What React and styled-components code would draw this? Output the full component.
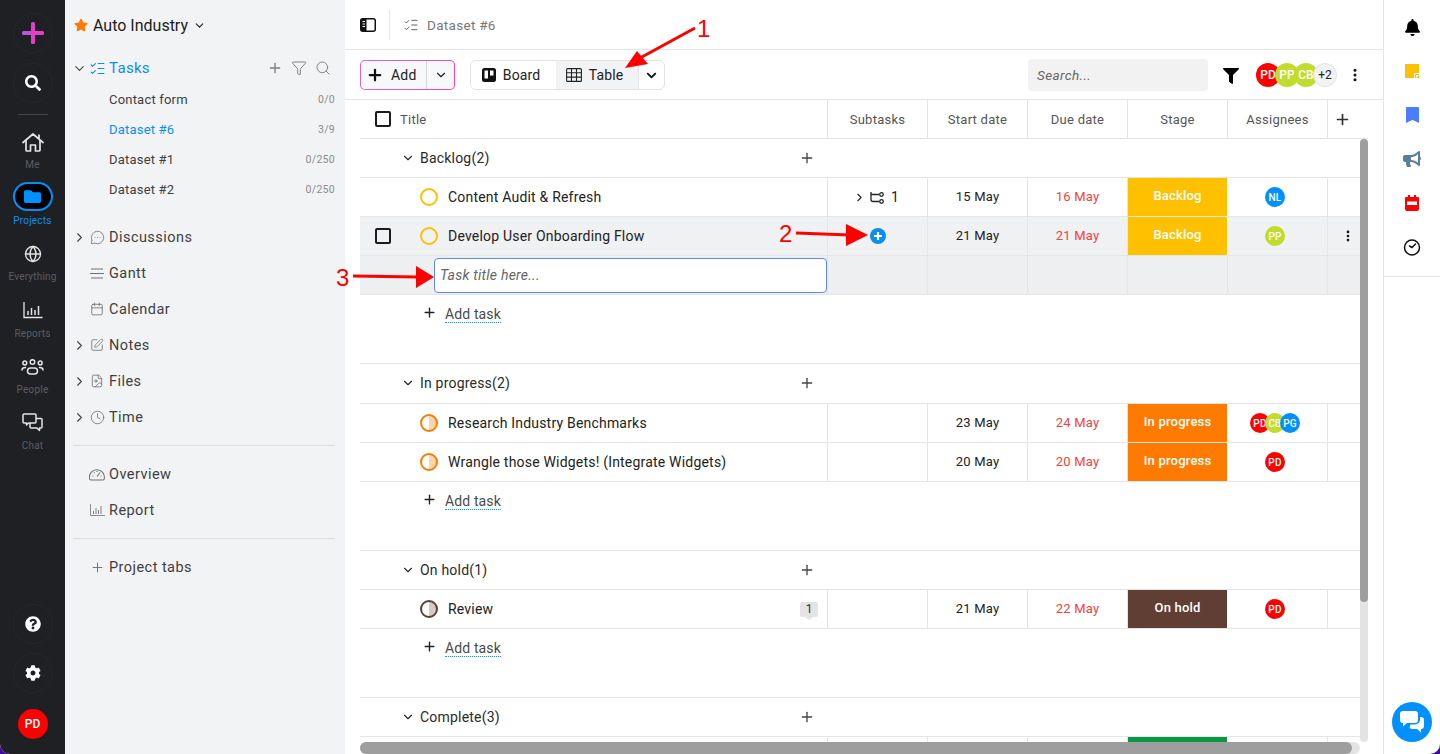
import React from "react";
import styled, { createGlobalStyle } from "styled-components";
import {
  Globe, Plus, ChevronDown, ChevronRight, ListChecks, Filter, Search,
  MessageCircleMore, Calendar, SquarePen, FileImage, Clock, EllipsisVertical,
} from "lucide-react";
import { FaStar, FaFilter, FaBell, FaBullhorn, FaFolder, FaSearch, FaQuestionCircle, FaCog } from "react-icons/fa";

const GlobalStyle = createGlobalStyle`
  html, body { margin: 0; padding: 0; background: #3d0f9c; }
  * { box-sizing: border-box; }
  body { font-family: Roboto, "Liberation Sans", sans-serif; color: #222; }
`;

const Page = styled.div`
  position: relative;
  display: flex;
  width: 1440px;
  height: 754px;
  overflow: hidden;
  background: #fff;
  border-radius: 0 0 10px 10px;
`;

/* far left dark rail */
const Rail = styled.nav`
  width: 65px;
  flex: none;
  background: #1f2024;
  display: flex;
  flex-direction: column;
  align-items: center;
  padding: 13px 0 15px;
  color: #fff;
`;
const RoundBtn = styled.div`
  width: 40px;
  height: 40px;
  flex: none;
  border-radius: 50%;
  border: 1px solid #26272b;
  display: flex;
  align-items: center;
  justify-content: center;
  margin-bottom: ${(p) => p.$mb || 0}px;
  svg { display: block; }
`;
const RailLine = styled.div`
  width: 30px;
  height: 1px;
  background: #44454a;
  margin: 1px 0 13px;
`;
const RailItem = styled.div`
  width: 100%;
  height: 56.2px;
  flex: none;
  padding-top: 2px;
  display: flex;
  flex-direction: column;
  align-items: center;
  font-size: 10px;
  line-height: 12px;
  letter-spacing: 0.2px;
  color: ${(p) => (p.$active ? "#0a8fef" : "#5d5e63")};
`;
const RailIcon = styled.div`
  width: 40px;
  height: 24px;
  margin-bottom: 5px;
  display: flex;
  align-items: center;
  justify-content: center;
  color: #e4e4e4;
`;
const ActivePill = styled.div`
  width: 40px;
  height: 29px;
  margin: -4px 0 4px;
  border-radius: 15px;
  border: 2px solid #0091ff;
  background: #000;
  color: #0091ff;
  display: flex;
  align-items: center;
  justify-content: center;
`;
const RailSpacer = styled.div`
  flex: 1;
`;
const UserBadge = styled.div`
  width: 30px;
  height: 30px;
  border-radius: 50%;
  background: #ff0000;
  color: #fff;
  font-size: 12px;
  font-weight: 500;
  display: flex;
  align-items: center;
  justify-content: center;
`;

/* project sidebar */
const Sidebar = styled.aside`
  width: 280px;
  flex: none;
  background: #f2f3f5;
  padding: 0 10px 0 6px;
`;
const ProjectHead = styled.div`
  height: 50px;
  padding-left: 3px;
  display: flex;
  align-items: center;
  font-size: 16px;
  color: #1c1c1c;
  span { margin: 0 5px 0 5px; }
`;
const NavRow = styled.div`
  height: 36px;
  display: flex;
  align-items: center;
  color: #3f3f3f;
  font-size: 14.5px;
  letter-spacing: 0.45px;
  margin-top: ${(p) => p.$mt || 0}px;
`;
const TasksRow = styled(NavRow)`
  height: 31px;
  margin-top: 3px;
  padding-bottom: 1px;
  color: #0a8fef;
  font-size: 15px;
  letter-spacing: 0.3px;
`;
const ChevronSlot = styled.div`
  width: 16px;
  flex: none;
  display: flex;
  justify-content: center;
  color: #444;
`;
const IconSlot = styled.div`
  width: 18px;
  flex: none;
  margin: 0 3px 0 1px;
  display: flex;
  justify-content: center;
  color: ${(p) => p.$color || "#707070"};
`;
const RowTools = styled.div`
  margin-left: auto;
  display: flex;
  gap: 8px;
  color: #7b7b7b;
  padding-right: 4px;
`;
const SubRow = styled.div`
  height: 30px;
  padding-left: 38px;
  display: flex;
  align-items: center;
  justify-content: space-between;
  font-size: 13px;
  letter-spacing: 0.2px;
  color: ${(p) => (p.$active ? "#0a8fef" : "#3f3f3f")};
`;
const Count = styled.span`
  font-size: 10.5px;
  letter-spacing: 0.3px;
  color: #8b8b8b;
`;
const SideLine = styled.div`
  height: 1px;
  margin: 10px 0 10px 2px;
  background: #dcdcdc;
`;

/* centre */
const Main = styled.main`
  flex: 1;
  min-width: 0;
  display: flex;
  flex-direction: column;
`;
const TopBar = styled.header`
  height: 50px;
  flex: none;
  border-bottom: 1px solid #e5e5e5;
  padding-left: 15px;
  display: flex;
  align-items: center;
  font-size: 13.5px;
  letter-spacing: 0.3px;
  color: #777;
`;
const TopDivider = styled.div`
  width: 1px;
  height: 30px;
  background: #e5e5e5;
  margin: 0 13px;
`;
const Crumb = styled.span`
  margin-left: 8px;
`;
const Toolbar = styled.div`
  height: 50px;
  flex: none;
  border-bottom: 1px solid #e5e5e5;
  padding: 0 20px 0 15px;
  display: flex;
  align-items: center;
`;
const AddGroup = styled.div`
  width: 95px;
  height: 30px;
  margin-top: 1px;
  border: 1px solid transparent;
  border-radius: 5px;
  background: linear-gradient(#f7f8f9, #f7f8f9) padding-box, linear-gradient(120deg, #c96bf0, #ff3fa0) border-box;
  display: flex;
  align-items: center;
  font-size: 14px;
  letter-spacing: 0.2px;
  color: #222;
`;
const AddLabel = styled.div`
  width: 66px;
  height: 100%;
  padding-left: 5px;
  display: flex;
  align-items: center;
  gap: 7px;
  border-right: 1px solid #d8d8d8;
`;
const AddCaret = styled.div`
  flex: 1;
  display: flex;
  justify-content: center;
`;
const ViewSwitch = styled.div`
  width: 195px;
  height: 30px;
  margin: 1px 0 0 15px;
  border: 1px solid #e3e3e3;
  border-radius: 6px;
  display: flex;
  overflow: hidden;
  font-size: 14px;
  letter-spacing: 0.1px;
  color: #222;
`;
const ViewTab = styled.div`
  width: ${(p) => p.$w}px;
  padding-right: 5px;
  display: flex;
  align-items: center;
  justify-content: center;
  gap: 7px;
  background: ${(p) => (p.$active ? "#f2f3f5" : "#fff")};
  border-right: ${(p) => (p.$active ? "1px solid #e3e3e3" : "0")};
`;
const ViewCaret = styled.div`
  flex: 1;
  display: flex;
  align-items: center;
  justify-content: center;
`;
const SearchBox = styled.div`
  width: 180px;
  height: 32px;
  margin-left: auto;
  padding: 1px 0 0 9px;
  border-radius: 4px;
  background: #f2f2f2;
  display: flex;
  align-items: center;
  font-size: 13.5px;
  font-style: italic;
  letter-spacing: 0.4px;
  color: #666;
`;
const ToolbarFilter = styled.div`
  margin: 2px 17px 0 15px;
  display: flex;
`;
const AvatarStack = styled.div`
  display: flex;
  align-items: center;
`;
const Avatar = styled.div`
  width: ${(p) => p.$size || 20}px;
  height: ${(p) => p.$size || 20}px;
  flex: none;
  margin-left: ${(p) => p.$overlap || 0}px;
  border-radius: 50%;
  background: ${(p) => p.$bg};
  color: ${(p) => p.$fg || "#fff"};
  border: ${(p) => (p.$outlined ? "1px solid #e2e2e2" : "0")};
  font-size: ${(p) => p.$font || 10}px;
  font-weight: ${(p) => (p.$outlined ? 400 : 500)};
  display: flex;
  align-items: center;
  justify-content: center;
  overflow: hidden;
  white-space: nowrap;
`;
const ToolbarMore = styled.div`
  margin-left: 10px;
  display: flex;
  color: #111;
`;

/* table */
const TablePanel = styled.div`
  position: relative;
  flex: 1;
  min-height: 0;
  margin: 0 15px 0 15px;
  overflow: hidden;
`;
const COLS = "468px repeat(5, 100px) 32px";
const HeadRow = styled.div`
  display: grid;
  grid-template-columns: ${COLS};
  height: 39px;
  border-bottom: 1px solid #e5e5e5;
  font-size: 13px;
  letter-spacing: 0.25px;
  color: #555;
`;
const HeadCell = styled.div`
  display: flex;
  align-items: center;
  justify-content: center;
  border-right: 1px solid #e5e5e5;
`;
const TitleHead = styled(HeadCell)`
  justify-content: flex-start;
  padding-left: 15px;
  gap: 9px;
`;
const PlusHead = styled(HeadCell)`
  border-right: 0;
  justify-content: flex-start;
  padding-left: 6px;
  color: #333;
`;
const CheckBox = styled.div`
  width: 16px;
  height: 16px;
  flex: none;
  border: 2px solid #1c1c1c;
  border-radius: 2px;
  background: transparent;
`;
const GroupRow = styled.div`
  height: ${(p) => p.$h}px;
  border-bottom: 1px solid #e5e5e5;
`;
const GroupHead = styled.div`
  height: 38px;
  width: 468px;
  padding: 0 13px 0 41px;
  display: flex;
  align-items: center;
  gap: 5px;
  font-size: 14px;
  letter-spacing: 0.2px;
  color: #2a2a2a;
`;
const GroupPlus = styled.div`
  margin-left: auto;
  display: flex;
  color: #444;
`;
const TaskRow = styled.div`
  display: grid;
  grid-template-columns: ${COLS};
  height: 39px;
  border-bottom: 1px solid #e5e5e5;
  background: ${(p) => p.$bg || "#fff"};
`;
const Cell = styled.div`
  display: flex;
  align-items: center;
  justify-content: center;
  border-right: 1px solid #e5e5e5;
  font-size: 13px;
  letter-spacing: 0.2px;
  color: ${(p) => p.$color || "#222"};
  gap: 4px;
`;
const DateCell = styled(Cell)`
  padding-bottom: 1px;
`;
const SubtaskCell = styled(Cell)`
  padding-right: 3px;
`;
const SubCount = styled.span`
  margin-left: 2px;
  font-size: 14px;
`;
const TitleCell = styled(Cell)`
  justify-content: flex-start;
  padding-left: 60px;
  font-size: 14px;
  letter-spacing: 0.2px;
  gap: 10px;
`;
const InputCell = styled(TitleCell)`
  padding: 2px 0 1px 74px;
`;
const TaskInput = styled.div`
  width: 100%;
  height: 35px;
  padding: 0 0 1px 5px;
  border: 1px solid #5b8def;
  border-radius: 4px;
  background: #fff;
  display: flex;
  align-items: center;
  font-style: italic;
  color: #666;
  letter-spacing: 0.25px;
`;
const HoverCheck = styled(CheckBox)`
  margin-left: -45px;
  margin-right: 19px;
`;
const StatusRing = styled.div`
  width: 18px;
  height: 18px;
  flex: none;
  border-radius: 50%;
  border: 2px solid ${(p) => p.$color};
  background: ${(p) => (p.$half ? `linear-gradient(90deg, transparent 50%, ${p.$half} 50%)` : "transparent")};
`;
const CountFlag = styled.div`
  position: relative;
  width: 18px;
  height: 15px;
  margin: 0 9px 0 auto;
  border-radius: 2px;
  background: #e4e4e4;
  font-size: 12px;
  color: #333;
  letter-spacing: 0;
  display: flex;
  align-items: center;
  justify-content: center;
  &::after {
    content: "";
    position: absolute;
    left: 5px;
    top: 15px;
    border: 4px solid transparent;
    border-top: 3px solid #e4e4e4;
    border-bottom: 0;
  }
`;
const StageCell = styled.div`
  display: flex;
  align-items: center;
  justify-content: center;
  padding-bottom: 3px;
  background: ${(p) => p.$bg};
  border-right: 1px solid #fff;
  color: #fff;
  font-size: 13px;
  font-weight: 500;
  letter-spacing: 0.2px;
`;
const AssigneeCell = styled(Cell)`
  padding-right: 5px;
  gap: 0;
`;
const LastCell = styled(Cell)`
  border-right: 0;
  padding-left: 13px;
  color: #111;
  justify-content: flex-start;
`;
const AddTaskBlock = styled.div`
  height: 69px;
  border-bottom: 1px solid #e5e5e5;
  padding: 10px 0 0 62px;
  display: flex;
  align-items: flex-start;
  gap: 8px;
  color: #222;
`;
const AddTaskLabel = styled.span`
  font-size: 14px;
  line-height: 18px;
  letter-spacing: 0.12px;
  color: #4a4a4a;
  border-bottom: 1px dotted #1b94ee;
  height: 18px;
`;
const VScroll = styled.div`
  position: absolute;
  right: 0;
  top: 39px;
  bottom: 12px;
  width: 8px;
  border-radius: 4px;
  background: #e3e3e3;
  &::after {
    content: "";
    position: absolute;
    left: 0;
    right: 0;
    top: 0;
    height: 463px;
    border-radius: 4px;
    background: #9e9e9e;
  }
`;
const HScroll = styled.div`
  position: absolute;
  left: 0;
  right: 8px;
  bottom: 0;
  height: 12px;
  border-radius: 6px;
  background: #e3e3e3;
  &::after {
    content: "";
    position: absolute;
    left: 0;
    top: 0;
    bottom: 0;
    width: 992px;
    border-radius: 6px;
    background: #9e9e9e;
  }
`;

/* right rail */
const RightRail = styled.aside`
  width: 57px;
  flex: none;
  border-left: 1px solid #e5e5e5;
`;
const RightIcons = styled.div`
  height: 277px;
  padding-top: 5px;
  border-bottom: 1px solid #e5e5e5;
  display: flex;
  flex-direction: column;
  align-items: center;
`;
const RightIcon = styled.div`
  height: 44px;
  flex: none;
  display: flex;
  align-items: center;
  justify-content: center;
  color: ${(p) => p.$color || "#000"};
`;
const ChatBubble = styled.div`
  position: absolute;
  left: 1392px;
  top: 702px;
  width: 40px;
  height: 40px;
  border-radius: 50%;
  background: #0091ff;
  display: flex;
  align-items: center;
  justify-content: center;
`;

/* red annotations drawn over the screenshot */
const Arrows = styled.svg`
  position: absolute;
  left: 0;
  top: 0;
  pointer-events: none;
`;
const Mark = styled.span`
  position: absolute;
  left: ${(p) => p.$x}px;
  top: ${(p) => p.$y}px;
  font-family: "Liberation Sans", sans-serif;
  font-size: 24px;
  line-height: 24px;
  color: #f00;
`;

const Dots = ({ size = 16 }) => <EllipsisVertical size={size} strokeWidth={2.6} />;

const RailHome = () => (
  <svg width="22" height="21" viewBox="0 0 22 21" fill="none" stroke="currentColor" strokeWidth="1.700" strokeLinejoin="round" strokeLinecap="round">
    <path d="M1 10.500 11 2l10 8.500M17 3v4" />
    <path d="M4 8.500V18a1 1 0 0 0 1 1h3.500v-6h5v6H17a1 1 0 0 0 1-1V8.500" />
  </svg>
);
const RailReports = () => (
  <svg width="20" height="17" viewBox="0 0 20 17" fill="none" stroke="currentColor">
    <path d="M1 0v15.500h18.500" strokeWidth="1.300" />
    <path d="M5 9v4M8.500 6v7M12 8v5M15.500 4v9" strokeWidth="1.500" />
  </svg>
);
const RailPeople = () => (
  <svg width="23" height="16" viewBox="0 0 23 16" fill="none" stroke="currentColor" strokeWidth="1.500" strokeLinecap="round">
    <circle cx="11.500" cy="3" r="2.300" />
    <circle cx="3.800" cy="4" r="1.900" />
    <circle cx="19.200" cy="4" r="1.900" />
    <rect x="6.500" y="9" width="10" height="6" rx="3" />
    <path d="M1 11c0-1.500 1-2.500 3.500-2.500M22 11c0-1.500-1-2.500-3.500-2.500" />
  </svg>
);
const RailChat = () => (
  <svg width="21" height="19" viewBox="0 0 21 19" fill="none" stroke="currentColor" strokeWidth="1.500" strokeLinejoin="round">
    <path d="M2 1h11a1 1 0 0 1 1 1v7a1 1 0 0 1-1 1H6.500L4.500 12v-2H2a1 1 0 0 1-1-1V2a1 1 0 0 1 1-1z" />
    <path d="M14 5.500h5a1 1 0 0 1 1 1V14a1 1 0 0 1-1 1h-1.500v2.500L15 15H9a1 1 0 0 1-1-1v-4" />
  </svg>
);
const RailPlus = () => (
  <svg width="22" height="22" viewBox="0 0 22 22">
    <defs>
      <linearGradient id="pl" x1="0" y1="0" x2="1" y2="0">
        <stop offset="0" stopColor="#b05be8" />
        <stop offset="1" stopColor="#f03cb0" />
      </linearGradient>
    </defs>
    <rect x="0" y="9" width="22" height="4" rx="1.500" fill="url(#pl)" />
    <rect x="9" y="0" width="4" height="22" rx="1.500" fill="#e23fc8" />
  </svg>
);
const GaugeIcon = () => (
  <svg width="16" height="13" viewBox="0 0 16 13" fill="none" stroke="#707070" strokeWidth="1.100">
    <path d="M2 12h12a1.500 1.500 0 0 0 1.300-1.500 7.500 7.500 0 1 0-14.800 0A1.500 1.500 0 0 0 2 12z" />
    <path d="M8 8.500 11 4.500M3.500 8h1M11.500 8h1M5 4.500l.6.6M8 3v1" />
  </svg>
);
const ReportIcon = () => (
  <svg width="15" height="12" viewBox="0 0 15 12" fill="none" stroke="#808080" strokeWidth="0.900">
    <path d="M.5 0v11.500H15" />
    <path d="M3.500 7v3M6 4v6M8.500 6v4M11 2v8" strokeWidth="1" />
  </svg>
);
const GanttIcon = () => (
  <svg width="14" height="11" viewBox="0 0 14 11" stroke="#707070" strokeWidth="1.200"><path d="M1 1h12M0 5.500h14M1 10h12" /></svg>
);
const PanelIcon = () => (
  <svg width="16" height="14" viewBox="0 0 16 14">
    <rect x="0.750" y="0.750" width="14.500" height="12.500" rx="2" fill="none" stroke="#111" strokeWidth="1.500" />
    <rect x="1" y="1" width="5.500" height="12" fill="#111" />
    <path d="M2.500 3.500h2.500M2.500 6h2.500M2.500 8.500h2.500" stroke="#fff" strokeWidth="1" />
  </svg>
);
const BoardIcon = () => (
  <svg width="14" height="14" viewBox="0 0 14 14">
    <rect width="14" height="14" rx="2.500" fill="#111" />
    <rect x="2.500" y="2.500" width="3.500" height="8" fill="#fff" />
    <rect x="8" y="2.500" width="3.500" height="5" fill="#fff" />
  </svg>
);
const TableIcon = () => (
  <svg width="16" height="14" viewBox="0 0 16 14" fill="none" stroke="#222" strokeWidth="1.100">
    <rect x="0.600" y="0.600" width="14.800" height="12.800" rx="1" />
    <path d="M.6 4.800h14.800M.6 9.100h14.800M5.500.6v12.800M10.500.6v12.800" />
  </svg>
);
const TreeIcon = () => (
  <svg width="15" height="13" viewBox="0 0 15 13" fill="none" stroke="#222" strokeWidth="1.300">
    <path d="M1 1v7.500a2 2 0 0 0 2 2h6M1 3.500h8" />
    <circle cx="11.500" cy="3.500" r="1.800" />
    <circle cx="11.500" cy="10.500" r="1.800" />
  </svg>
);
const BlueAdd = () => (
  <svg width="16" height="16" viewBox="0 0 16 16">
    <circle cx="8" cy="8" r="8" fill="#0a8fef" />
    <path d="M8 4v8M4 8h8" stroke="#fff" strokeWidth="2.200" />
  </svg>
);
const StickyIcon = () => (
  <svg width="14" height="14" viewBox="0 0 14 14">
    <rect width="14" height="14" fill="#ffc000" />
    <path d="M9.500 14V9.500H14" fill="none" stroke="#fff" strokeWidth="1" />
    <path d="M11 14v-3h3z" fill="#fff" />
  </svg>
);
const BookmarkIcon = () => (
  <svg width="13" height="16" viewBox="0 0 13 16">
    <path d="M0 1a1 1 0 0 1 1-1h11a1 1 0 0 1 1 1v15l-3-1.500-3.500-1.500-3.500 1.500L0 16z" fill="#4a7dff" />
  </svg>
);
const RedCalendar = () => (
  <svg width="14" height="16" viewBox="0 0 14 16">
    <path d="M3 0h2v2h4V0h2v2h2a1 1 0 0 1 1 1v11a2 2 0 0 1-2 2H2a2 2 0 0 1-2-2V3a1 1 0 0 1 1-1h2z" fill="#f00" />
    <rect x="2" y="6.500" width="10" height="3.500" fill="#fff" />
  </svg>
);
const DialIcon = () => (
  <svg width="18" height="18" viewBox="0 0 18 18" fill="none" stroke="#111" strokeWidth="1.500">
    <circle cx="9" cy="9.500" r="7.500" />
    <path d="M12.500 6 9 9.500 6.500 8" strokeLinecap="round" />
  </svg>
);
const ChatWhite = () => (
  <svg width="24" height="22" viewBox="0 0 24 22" fill="#fff">
    <path d="M3 0h12a3 3 0 0 1 3 3v6a3 3 0 0 1-3 3H7l-4 3.500V12a3 3 0 0 1-3-3V3a3 3 0 0 1 3-3z" />
    <path d="M20 6h1a3 3 0 0 1 3 3v6a3 3 0 0 1-3 3v3.500L17 18h-5a3 3 0 0 1-2.500-1.500l1-3H15a5 5 0 0 0 5-5z" />
  </svg>
);

const GREY_BG = "#f0f1f3";

const dateCells = (start, due) => (
  <>
    <DateCell>{start}</DateCell>
    <DateCell $color="#f44141">{due}</DateCell>
  </>
);

const Group = ({ label, h = 39 }) => (
  <GroupRow $h={h}>
    <GroupHead>
      <ChevronDown size={14} strokeWidth={2} />
      {label}
      <GroupPlus>
        <Plus size={16} strokeWidth={2} />
      </GroupPlus>
    </GroupHead>
  </GroupRow>
);

const AddTask = () => (
  <AddTaskBlock>
    <Plus size={15} strokeWidth={2.200} />
    <AddTaskLabel>Add task</AddTaskLabel>
  </AddTaskBlock>
);

export default function App() {
  return (
    <Page>
      <GlobalStyle />
      <Rail>
        <RoundBtn $mb={10}><RailPlus /></RoundBtn>
        <RoundBtn $mb={10}><FaSearch size={16} color="#fff" /></RoundBtn>
        <RailLine />
        <RailItem>
          <RailIcon><RailHome /></RailIcon>
          Me
        </RailItem>
        <RailItem $active>
          <ActivePill><FaFolder size={17} /></ActivePill>
          Projects
        </RailItem>
        <RailItem>
          <RailIcon><Globe size={18} strokeWidth={1.800} /></RailIcon>
          Everything
        </RailItem>
        <RailItem>
          <RailIcon><RailReports /></RailIcon>
          Reports
        </RailItem>
        <RailItem>
          <RailIcon><RailPeople /></RailIcon>
          People
        </RailItem>
        <RailItem>
          <RailIcon><RailChat /></RailIcon>
          Chat
        </RailItem>
        <RailSpacer />
        <RoundBtn $mb={9}><FaQuestionCircle size={16} color="#fff" /></RoundBtn>
        <RoundBtn $mb={16}><FaCog size={16} color="#fff" /></RoundBtn>
        <UserBadge>PD</UserBadge>
      </Rail>

      <Sidebar>
        <ProjectHead>
          <FaStar size={14} color="#ff7a00" />
          <span>Auto Industry</span>
          <ChevronDown size={13} strokeWidth={2} />
        </ProjectHead>
        <TasksRow>
          <ChevronSlot><ChevronDown size={15} strokeWidth={1.800} /></ChevronSlot>
          <IconSlot $color="#0a8fef"><ListChecks size={17} strokeWidth={1.600} /></IconSlot>
          Tasks
          <RowTools>
            <Plus size={16} strokeWidth={2} />
            <Filter size={16} strokeWidth={1.400} />
            <Search size={16} strokeWidth={1.400} />
          </RowTools>
        </TasksRow>
        <SubRow>Contact form <Count>0/0</Count></SubRow>
        <SubRow $active>Dataset #6 <Count>3/9</Count></SubRow>
        <SubRow>Dataset #1 <Count>0/250</Count></SubRow>
        <SubRow>Dataset #2 <Count>0/250</Count></SubRow>
        <NavRow $mt={15}>
          <ChevronSlot><ChevronRight size={15} strokeWidth={1.800} /></ChevronSlot>
          <IconSlot><MessageCircleMore size={15} strokeWidth={1.300} /></IconSlot>
          Discussions
        </NavRow>
        <NavRow>
          <ChevronSlot />
          <IconSlot><GanttIcon /></IconSlot>
          Gantt
        </NavRow>
        <NavRow>
          <ChevronSlot />
          <IconSlot><Calendar size={14} strokeWidth={1.400} /></IconSlot>
          Calendar
        </NavRow>
        <NavRow>
          <ChevronSlot><ChevronRight size={15} strokeWidth={1.800} /></ChevronSlot>
          <IconSlot><SquarePen size={14} strokeWidth={1.400} /></IconSlot>
          Notes
        </NavRow>
        <NavRow>
          <ChevronSlot><ChevronRight size={15} strokeWidth={1.800} /></ChevronSlot>
          <IconSlot><FileImage size={14} strokeWidth={1.400} /></IconSlot>
          Files
        </NavRow>
        <NavRow>
          <ChevronSlot><ChevronRight size={15} strokeWidth={1.800} /></ChevronSlot>
          <IconSlot><Clock size={15} strokeWidth={1.300} /></IconSlot>
          Time
        </NavRow>
        <SideLine />
        <NavRow>
          <ChevronSlot />
          <IconSlot><GaugeIcon /></IconSlot>
          Overview
        </NavRow>
        <NavRow>
          <ChevronSlot />
          <IconSlot><ReportIcon /></IconSlot>
          Report
        </NavRow>
        <SideLine />
        <NavRow>
          <ChevronSlot />
          <IconSlot><Plus size={15} strokeWidth={1.500} /></IconSlot>
          Project tabs
        </NavRow>
      </Sidebar>

      <Main>
        <TopBar>
          <PanelIcon />
          <TopDivider />
          <ListChecks size={16} strokeWidth={1.500} color="#666" />
          <Crumb>Dataset #6</Crumb>
        </TopBar>
        <Toolbar>
          <AddGroup>
            <AddLabel><Plus size={18} strokeWidth={3} color="#111" /> Add</AddLabel>
            <AddCaret><ChevronDown size={14} strokeWidth={2} /></AddCaret>
          </AddGroup>
          <ViewSwitch>
            <ViewTab $w={85}><BoardIcon /> Board</ViewTab>
            <ViewTab $w={83} $active><TableIcon /> Table</ViewTab>
            <ViewCaret><ChevronDown size={15} strokeWidth={3} color="#111" /></ViewCaret>
          </ViewSwitch>
          <SearchBox>Search...</SearchBox>
          <ToolbarFilter><FaFilter size={16} color="#000" /></ToolbarFilter>
          <AvatarStack>
            <Avatar $size={24} $font={12} $bg="#f00">PD</Avatar>
            <Avatar $size={24} $font={12} $overlap={-5} $bg="#c2dc2d">PP</Avatar>
            <Avatar $size={24} $font={12} $overlap={-5} $bg="#c2dc2d">CB</Avatar>
            <Avatar $size={24} $font={12} $overlap={-5} $bg="#f2f3f5" $fg="#222" $outlined>+2</Avatar>
          </AvatarStack>
          <ToolbarMore><Dots /></ToolbarMore>
        </Toolbar>

        <TablePanel>
          <HeadRow>
            <TitleHead><CheckBox /> Title</TitleHead>
            <HeadCell>Subtasks</HeadCell>
            <HeadCell>Start date</HeadCell>
            <HeadCell>Due date</HeadCell>
            <HeadCell>Stage</HeadCell>
            <HeadCell>Assignees</HeadCell>
            <PlusHead><Plus size={17} strokeWidth={2.400} /></PlusHead>
          </HeadRow>

          <Group label="Backlog(2)" />
          <TaskRow>
            <TitleCell><StatusRing $color="#ffc000" /> Content Audit &amp; Refresh</TitleCell>
            <SubtaskCell><ChevronRight size={13} strokeWidth={2} /><TreeIcon /><SubCount>1</SubCount></SubtaskCell>
            {dateCells("15 May", "16 May")}
            <StageCell $bg="#ffc000">Backlog</StageCell>
            <AssigneeCell><Avatar $bg="#0091ff">NL</Avatar></AssigneeCell>
            <LastCell />
          </TaskRow>
          <TaskRow $bg={GREY_BG}>
            <TitleCell><HoverCheck /><StatusRing $color="#ffc000" /> Develop User Onboarding Flow</TitleCell>
            <Cell><BlueAdd /></Cell>
            {dateCells("21 May", "21 May")}
            <StageCell $bg="#ffc000">Backlog</StageCell>
            <AssigneeCell><Avatar $bg="#c2dc2d">PP</Avatar></AssigneeCell>
            <LastCell><Dots size={14} /></LastCell>
          </TaskRow>
          <TaskRow $bg="#eeeff1">
            <InputCell><TaskInput>Task title here...</TaskInput></InputCell>
            <Cell />
            <Cell />
            <Cell />
            <Cell />
            <Cell />
            <LastCell />
          </TaskRow>
          <AddTask />

          <Group label="In progress(2)" h={40} />
          <TaskRow>
            <TitleCell><StatusRing $color="#ff7a00" $half="#ffd4ab" /> Research Industry Benchmarks</TitleCell>
            <Cell />
            {dateCells("23 May", "24 May")}
            <StageCell $bg="#ff7a00">In progress</StageCell>
            <AssigneeCell>
              <Avatar $bg="#f00">PD</Avatar>
              <Avatar $overlap={-5} $bg="#c2dc2d">CB</Avatar>
              <Avatar $overlap={-5} $bg="#0091ff">PG</Avatar>
            </AssigneeCell>
            <LastCell />
          </TaskRow>
          <TaskRow>
            <TitleCell><StatusRing $color="#ff7a00" $half="#ffd4ab" /> Wrangle those Widgets! (Integrate Widgets)</TitleCell>
            <Cell />
            {dateCells("20 May", "20 May")}
            <StageCell $bg="#ff7a00">In progress</StageCell>
            <AssigneeCell><Avatar $bg="#f00">PD</Avatar></AssigneeCell>
            <LastCell />
          </TaskRow>
          <AddTask />

          <Group label="On hold(1)" />
          <TaskRow>
            <TitleCell><StatusRing $color="#613e34" $half="#d2cbc9" /> Review <CountFlag>1</CountFlag></TitleCell>
            <Cell />
            {dateCells("21 May", "22 May")}
            <StageCell $bg="#613e34">On hold</StageCell>
            <AssigneeCell><Avatar $bg="#f00">PD</Avatar></AssigneeCell>
            <LastCell />
          </TaskRow>
          <AddTask />

          <Group label="Complete(3)" />
          <TaskRow>
            <TitleCell />
            <Cell />
            <Cell />
            <Cell />
            <StageCell $bg="#0a9645" />
            <Cell />
            <LastCell />
          </TaskRow>

          <VScroll />
          <HScroll />
        </TablePanel>
      </Main>

      <RightRail>
        <RightIcons>
          <RightIcon><FaBell size={17} /></RightIcon>
          <RightIcon><StickyIcon /></RightIcon>
          <RightIcon><BookmarkIcon /></RightIcon>
          <RightIcon $color="#5a7f99"><FaBullhorn size={18} /></RightIcon>
          <RightIcon><RedCalendar /></RightIcon>
          <RightIcon><DialIcon /></RightIcon>
        </RightIcons>
      </RightRail>
      <ChatBubble><ChatWhite /></ChatBubble>

      <Arrows width="1440" height="754" viewBox="0 0 1440 754">
        <path d="M695 28 640 58" stroke="#f00" strokeWidth="3" />
        <path d="M625 68 637 51 648 64z" fill="#f00" />
        <path d="M796 233 850 235" stroke="#f00" strokeWidth="3" />
        <path d="M868 235 846 224 846 246z" fill="#f00" />
        <path d="M353 276 418 277" stroke="#f00" strokeWidth="3" />
        <path d="M434 277 416 266 416 288z" fill="#f00" />
      </Arrows>
      <Mark $x={697} $y={17}>1</Mark>
      <Mark $x={779} $y={222}>2</Mark>
      <Mark $x={336} $y={266}>3</Mark>
    </Page>
  );
}
